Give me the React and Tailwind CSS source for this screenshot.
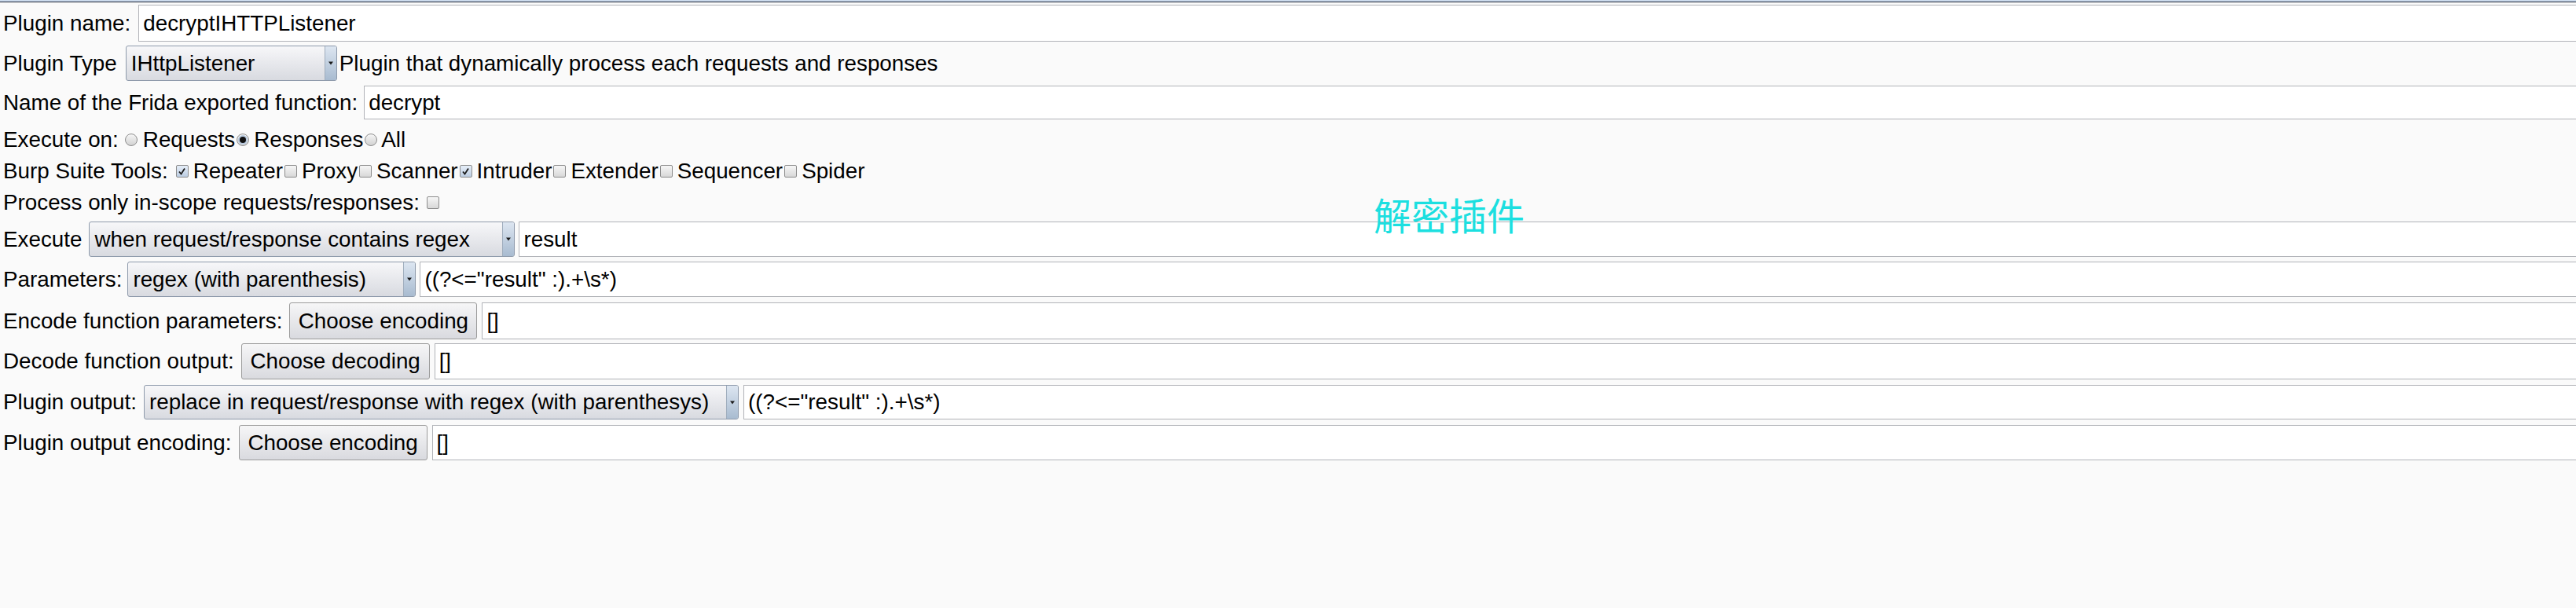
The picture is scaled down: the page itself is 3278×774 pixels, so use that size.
import React from 'react';

function Combo({ value, className }) {
    return (
        <div className={`flex h-full items-stretch rounded-[3px] border border-[#8e9aab] bg-linear-to-b from-[#f7f7f9] to-[#d8dae0] ${className}`}>
            <div className="flex flex-1 items-center overflow-hidden whitespace-nowrap pl-[6px]">{value}</div>
            <div className="flex w-[15px] items-center justify-center rounded-r-[2px] border-l border-[#9fadbd] bg-linear-to-b from-[#dde6f1] to-[#a8bbd0]">
                <svg width="6" height="5" viewBox="0 0 6 5">
                    <path d="M0 0.5h6L3 4.5z" fill="#1a1a1a" />
                </svg>
            </div>
        </div>
    );
}

function Button({ children, className }) {
    return (
        <div className={`flex h-full items-center justify-center whitespace-nowrap rounded-[3px] border border-[#9b9b9b] bg-linear-to-b from-[#f6f6f7] to-[#d9dadf] ${className}`}>
            {children}
        </div>
    );
}

function Field({ value, className }) {
    return (
        <div className={`-mr-[3px] flex h-full flex-1 items-center whitespace-nowrap border border-[#b1b3b8] bg-white pl-[5px] ${className}`}>
            {value}
        </div>
    );
}

function Radio({ checked }) {
    return (
        <div className="ml-[2px] flex h-[16px] w-[16px] shrink-0 items-center justify-center rounded-full border border-[#8c8c8c] bg-linear-to-b from-[#f6f6f6] to-[#d2d2d2]">
            {checked && <div className="h-[8px] w-[8px] rounded-full bg-[#111] ring-2 ring-[#b9cbe0]" />}
        </div>
    );
}

function Check({ checked }) {
    return (
        <div className={`ml-[2px] flex h-[16px] w-[16px] shrink-0 items-center justify-center rounded-[2px] border border-[#8c8c8c] ${checked ? 'bg-linear-to-b from-[#e6eef8] to-[#bccde2]' : 'bg-linear-to-b from-[#f6f6f6] to-[#d8d8d8]'}`}>
            {checked && (
                <svg width="11" height="11" viewBox="0 0 11 11">
                    <path d="M2 5.5l2.5 3L9 1.5" fill="none" stroke="#1a1a1a" strokeWidth="1.8" />
                </svg>
            )}
        </div>
    );
}

export default function App() {
    return (
        <div className="relative h-[774px] w-[3278px] overflow-hidden bg-[#fafafa] font-['Liberation_Sans',Arial,sans-serif] text-[27.8px] text-black">
            {/* window edge */}
            <div className="h-[2px] bg-[#cddcee]" />
            <div className="h-[1px] bg-[#1d2637]" />

            <div className="flex flex-col pl-[4px]">
                {/* Plugin name */}
                <div className="mt-[3px] flex h-[47px] items-center">
                    <span>Plugin name:</span>
                    <Field value="decryptIHTTPListener" className="ml-[10px]" />
                </div>

                {/* Plugin type */}
                <div className="mt-[5px] flex h-[45px] items-center">
                    <span>Plugin Type</span>
                    <Combo value="IHttpListener" className="ml-[11px] w-[269px]" />
                    <span className="ml-[3px] whitespace-nowrap">Plugin that dynamically process each requests and responses</span>
                </div>

                {/* Frida function */}
                <div className="mt-[6px] flex h-[43px] items-center">
                    <span className="whitespace-nowrap">Name of the Frida exported function:</span>
                    <Field value="decrypt" className="ml-[8px]" />
                </div>

                {/* Execute on */}
                <div className="mt-[6px] flex h-[40px] items-center whitespace-nowrap">
                    <span className="mr-[6px]">Execute on:</span>
                    <Radio />
                    <span className="ml-[7px]">Requests</span>
                    <Radio checked />
                    <span className="ml-[6px]">Responses</span>
                    <Radio />
                    <span className="ml-[5px]">All</span>
                </div>

                {/* Burp tools */}
                <div className="flex h-[40px] items-center whitespace-nowrap">
                    <span className="mr-[8px]">Burp Suite Tools:</span>
                    <Check checked />
                    <span className="ml-[6px]">Repeater</span>
                    <Check />
                    <span className="ml-[6px]">Proxy</span>
                    <Check />
                    <span className="ml-[6px]">Scanner</span>
                    <Check checked />
                    <span className="ml-[6px]">Intruder</span>
                    <Check />
                    <span className="ml-[6px]">Extender</span>
                    <Check />
                    <span className="ml-[6px]">Sequencer</span>
                    <Check />
                    <span className="ml-[6px]">Spider</span>
                </div>

                {/* Scope */}
                <div className="flex h-[40px] items-center whitespace-nowrap">
                    <span className="mr-[7px]">Process only in-scope requests/responses:</span>
                    <Check />
                </div>

                {/* Execute condition */}
                <div className="mt-[4px] flex h-[45px] items-center">
                    <span>Execute</span>
                    <Combo value="when request/response contains regex" className="ml-[9px] w-[542px]" />
                    <Field value="result" className="ml-[5px]" />
                </div>

                {/* Parameters */}
                <div className="mt-[6px] flex h-[45px] items-center">
                    <span>Parameters:</span>
                    <Combo value="regex (with parenthesis)" className="ml-[7px] w-[367px]" />
                    <Field value={'((?<="result" :).+\\s*)'} className="ml-[5px]" />
                </div>

                {/* Encode */}
                <div className="mt-[7px] flex h-[47px] items-center">
                    <span className="whitespace-nowrap">Encode function parameters:</span>
                    <Button className="ml-[9px] w-[239px]">Choose encoding</Button>
                    <Field value="[]" className="ml-[6px]" />
                </div>

                {/* Decode */}
                <div className="mt-[5px] flex h-[46px] items-center">
                    <span className="whitespace-nowrap">Decode function output:</span>
                    <Button className="ml-[9px] w-[240px]">Choose decoding</Button>
                    <Field value="[]" className="ml-[6px]" />
                </div>

                {/* Plugin output */}
                <div className="mt-[7px] flex h-[44px] items-center">
                    <span className="whitespace-nowrap">Plugin output:</span>
                    <Combo value="replace in request/response with regex (with parenthesys)" className="ml-[9px] w-[757px]" />
                    <Field value={'((?<="result" :).+\\s*)'} className="ml-[6px]" />
                </div>

                {/* Output encoding */}
                <div className="mt-[7px] flex h-[45px] items-center">
                    <span className="whitespace-nowrap">Plugin output encoding:</span>
                    <Button className="ml-[9px] w-[240px]">Choose encoding</Button>
                    <Field value="[]" className="ml-[6px]" />
                </div>
            </div>

            {/* annotation */}
            <div className="absolute left-[1748px] top-[248px] font-['Noto_Sans_CJK_SC',sans-serif] text-[48px] leading-none text-[#1cdfe0]">
                解密插件
            </div>
        </div>
    );
}
